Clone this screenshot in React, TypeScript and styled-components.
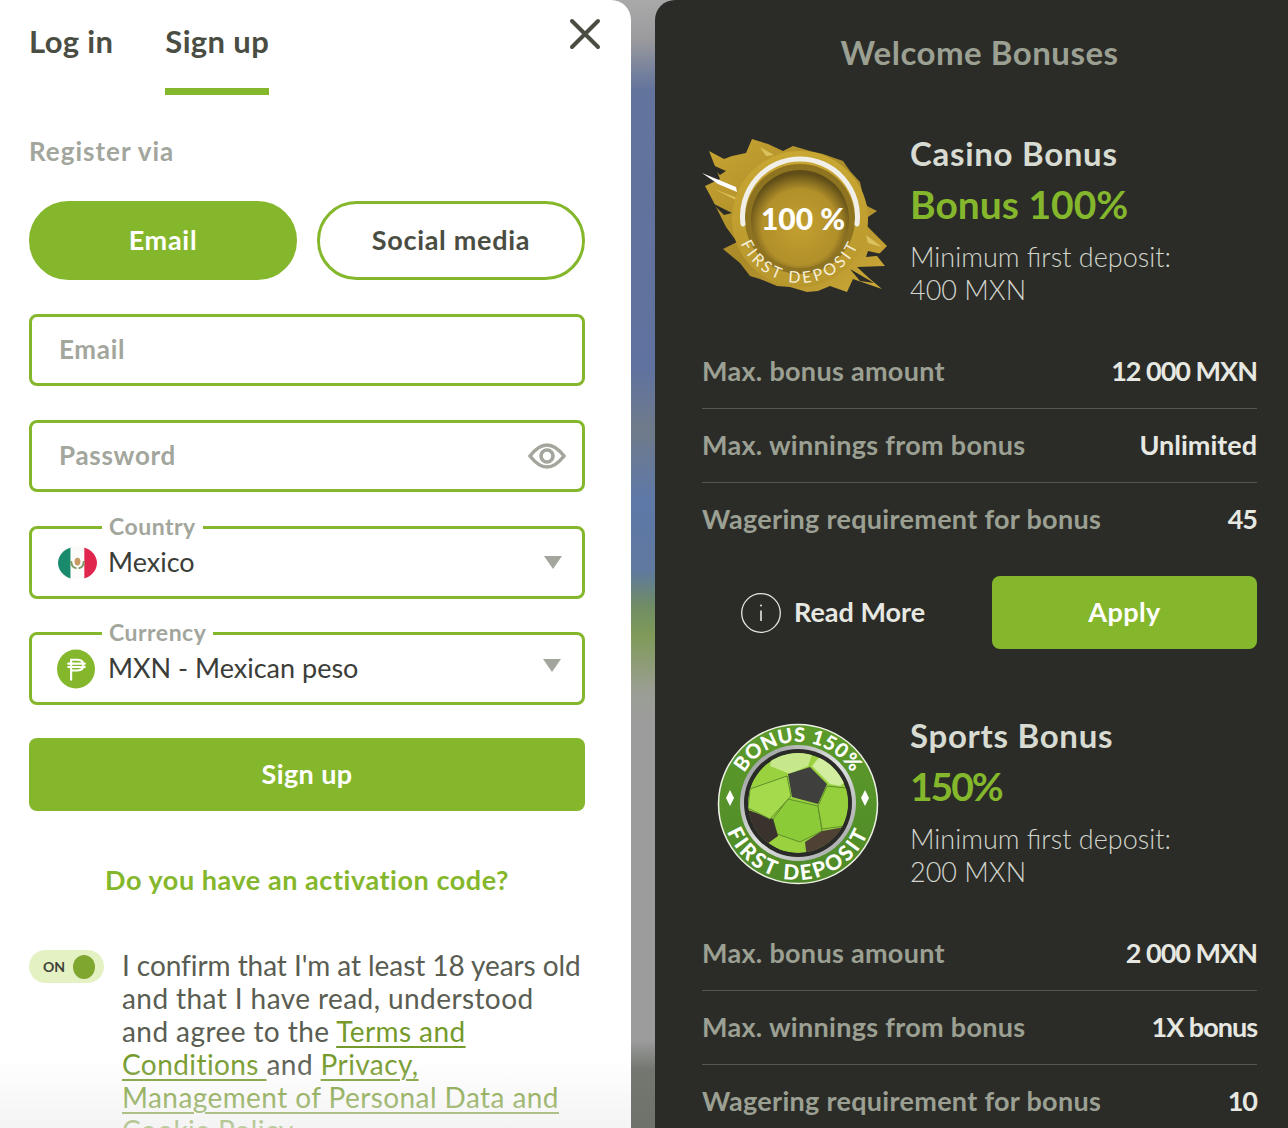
import React from "react";
import styled, { createGlobalStyle } from "styled-components";

const FONT = `"Lato", "Noto Sans", sans-serif`;
const GREEN = "#85b72c";

const Global = createGlobalStyle`
  html, body { margin: 0; padding: 0; overflow: hidden; }
  body { font-family: ${FONT}; }
  * { box-sizing: border-box; }
`;

const Page = styled.div`
  width: 1288px;
  height: 1128px;
  display: flex;
  gap: 24px;
  overflow: hidden;
  background: linear-gradient(180deg, #a9a9a9 0, #9a9a9d 40px, #62739c 90px, #60729f 370px, #6f7b8a 430px, #5e78a8 500px, #5f79a0 570px, #6f8c66 605px, #7f9a58 635px, #9a9e92 690px, #9c9c9c 720px, #9c9c9c 1040px, #737770 1070px, #6e726a 1128px);
`;

const AuthPanel = styled.section`
  position: relative;
  width: 631px;
  height: 1128px;
  flex: none;
  overflow: hidden;
  background: #fff;
  border-top-right-radius: 20px;
  padding: 0 46px 0 29px;
  &::after {
    content: "";
    position: absolute;
    left: 0;
    right: 0;
    bottom: 0;
    height: 70px;
    background: linear-gradient(180deg, rgba(240,240,240,0), rgba(236,236,236,.6));
    pointer-events: none;
  }
`;

const TabBar = styled.div`
  display: flex;
  gap: 52px;
  height: 95px;
  align-items: stretch;
  position: relative;
`;

const Tab = styled.div<{ $active?: boolean }>`
  font-size: 31px;
  letter-spacing: 0.35px;
  font-weight: 700;
  color: #4a4d42;
  padding-top: 22px;
  border-bottom: 7px solid ${(p) => (p.$active ? GREEN : "transparent")};
`;

const CloseButton = styled.svg`
  position: absolute;
  right: -16px;
  top: 18px;
`;

const SectionLabel = styled.div`
  margin-top: 39px;
  font-size: 26px;
  letter-spacing: 1px;
  line-height: 34px;
  font-weight: 700;
  color: #a2a69c;
`;

const MethodRow = styled.div`
  display: grid;
  grid-template-columns: 1fr 1fr;
  gap: 20px;
  margin-top: 33px;
`;

const MethodButton = styled.div<{ $active?: boolean }>`
  height: 79px;
  border-radius: 40px;
  border: 3px solid ${GREEN};
  background: ${(p) => (p.$active ? GREEN : "#fff")};
  color: ${(p) => (p.$active ? "#fff" : "#4a4d42")};
  font-size: 27px;
  letter-spacing: 0.7px;
  font-weight: 700;
  display: flex;
  align-items: center;
  justify-content: center;
  padding-bottom: 3px;
`;

const Form = styled.div`
  display: flex;
  flex-direction: column;
  margin-top: 34px;
`;

const Field = styled.div<{ $mt?: number; $h?: number }>`
  position: relative;
  height: ${(p) => p.$h ?? 72}px;
  margin-top: ${(p) => p.$mt ?? 0}px;
  border: 3px solid ${GREEN};
  border-radius: 8px;
  display: flex;
  align-items: center;
  padding: 0 27px 0 26px;
  background: #fff;
`;

const Placeholder = styled.span`
  margin-left: 1px;
  padding-bottom: 2px;
  font-size: 26px;
  letter-spacing: 0.7px;
  font-weight: 700;
  color: #a2a69c;
  flex: 1;
`;

const EyeSlot = styled.svg`
  margin-right: -11px;
`;

const FloatingLabel = styled.span`
  position: absolute;
  left: 70px;
  top: -16px;
  padding: 0 7px;
  background: #fff;
  font-size: 23px;
  letter-spacing: 0.5px;
  line-height: 26px;
  font-weight: 700;
  color: #a2a69c;
`;

const SelectValue = styled.span<{ $gap: number }>`
  margin-left: ${(p) => p.$gap}px;
  padding-bottom: 2px;
  font-size: 27px;
  color: #3b3d38;
  flex: 1;
`;

const Caret = styled.span<{ $lift?: number; $right: number }>`
  width: 0;
  height: 0;
  border-left: 9px solid transparent;
  border-right: 9px solid transparent;
  border-top: 13px solid #a2a69c;
  margin-right: ${(p) => p.$right}px;
  margin-bottom: ${(p) => p.$lift ?? 0}px;
`;

const SolidButton = styled.div<{ $w?: number; $mt?: number }>`
  height: 73px;
  width: ${(p) => (p.$w ? `${p.$w}px` : "100%")};
  margin-top: ${(p) => p.$mt ?? 0}px;
  background: ${GREEN};
  color: #fff;
  border-radius: 8px;
  font-size: 27px;
  letter-spacing: 0.4px;
  font-weight: 700;
  display: flex;
  align-items: center;
  justify-content: center;
  padding-bottom: 3px;
  flex: none;
`;

const ActivationLink = styled.div`
  margin-top: 52px;
  text-align: center;
  font-size: 27px;
  letter-spacing: 0.55px;
  line-height: 34px;
  font-weight: 700;
  color: ${GREEN};
`;

const ConsentRow = styled.div`
  display: flex;
  gap: 18px;
  margin-top: 52px;
`;

const Toggle = styled.div`
  width: 75px;
  height: 33px;
  margin-top: 1px;
  flex: none;
  border-radius: 17px;
  background: #e4f2c3;
  display: flex;
  align-items: center;
  justify-content: space-between;
  padding: 0 9px 0 14px;
  font-size: 14px;
  font-weight: 700;
  color: #3f4238;
  &::after {
    content: "";
    width: 22px;
    height: 24px;
    border-radius: 50%;
    background: #7fa62e;
  }
`;

const ConsentText = styled.div`
  font-size: 28px;
  letter-spacing: 0.42px;
  line-height: 33px;
  font-weight: 400;
  color: #5a5d52;
  flex: none;
  a {
    color: #759a2c;
    text-decoration: underline;
    text-decoration-thickness: 1.5px;
    text-underline-offset: 4px;
  }
`;

const ConsentLead = styled.span`
  letter-spacing: -0.07px;
`;

const BonusPanel = styled.section`
  flex: 1;
  height: 1128px;
  overflow: hidden;
  background: #2b2c28;
  border-top-left-radius: 20px;
  padding: 0 31px 0 47px;
`;

const PanelTitle = styled.h2`
  margin: 0;
  padding-top: 31px;
  text-align: center;
  font-size: 33px;
  letter-spacing: 0.5px;
  line-height: 42px;
  font-weight: 700;
  color: #9ba093;
`;

const BonusCard = styled.article<{ $mt: number }>`
  margin-top: ${(p) => p.$mt}px;
`;

const BonusHead = styled.div`
  display: grid;
  grid-template-columns: 208px 1fr;
  height: 174px;
`;

const BadgeSlot = styled.div`
  margin: 0 0 0 -12px;
  height: 174px;
`;

const BonusName = styled.div`
  font-size: 33px;
  letter-spacing: 0.7px;
  line-height: 42px;
  font-weight: 700;
  color: #d8dbd2;
`;

const BonusValue = styled.div<{ $spacing: number }>`
  margin-top: 5px;
  font-size: 39px;
  letter-spacing: ${(p) => p.$spacing}px;
  line-height: 50px;
  font-weight: 700;
  color: ${GREEN};
`;

const BonusMeta = styled.div`
  margin-top: 11px;
  font-size: 27px;
  line-height: 33px;
  font-weight: 300;
  color: #d2d5cc;
`;

const Stats = styled.div`
  margin-top: 28px;
`;

const StatRow = styled.div`
  height: 74px;
  display: flex;
  align-items: center;
  justify-content: space-between;
  border-top: 1px solid #54564f;
  padding-bottom: 2px;
  font-size: 27px;
  font-weight: 700;
  &:first-child {
    border-top: none;
  }
`;

const StatLabel = styled.span`
  color: #9ba093;
  letter-spacing: 0.3px;
`;

const StatValue = styled.span<{ $digits: boolean }>`
  color: #e6e8e1;
  letter-spacing: ${(p) => (p.$digits ? -1 : 0)}px;
`;

const Actions = styled.div`
  margin-top: 20px;
  display: flex;
  align-items: center;
  justify-content: space-between;
`;

const ReadMore = styled.div`
  margin-left: 39px;
  display: flex;
  align-items: center;
  gap: 13px;
  font-size: 27px;
  font-weight: 700;
  color: #e6e8e1;
`;

const ReadMoreLabel = styled.span`
  padding-bottom: 2px;
`;

const PesoSvg = styled.svg`
  margin-left: -1px;
`;

const CloseIcon = () => (
  <CloseButton width="32" height="32" viewBox="0 0 32 32" fill="none" stroke="#4a4d42" strokeWidth="4" strokeLinecap="round">
    <path d="M3 3 L29 29 M29 3 L3 29" />
  </CloseButton>
);

const EyeIcon = () => (
  <EyeSlot width="38" height="26" viewBox="0 0 38 26" fill="none" stroke="#a2a69c" strokeWidth="3.6">
    <path d="M2 13 C9 4 14 2 19 2 C24 2 29 4 36 13 C29 22 24 24 19 24 C14 24 9 22 2 13 Z" />
    <circle cx="19" cy="13" r="6" />
  </EyeSlot>
);

const MexicoFlag = () => (
  <svg width="39" height="34" viewBox="0 0 40 34">
    <defs>
      <clipPath id="flagClip"><ellipse cx="20" cy="17" rx="20" ry="17" /></clipPath>
    </defs>
    <g clipPath="url(#flagClip)">
      <rect width="13" height="34" fill="#1a8a6d" />
      <rect x="13" width="14" height="34" fill="#fbfbf9" />
      <rect x="27" width="13" height="34" fill="#e0264c" />
    </g>
    <ellipse cx="20" cy="15.5" rx="3" ry="4" fill="#c79a63" />
    <path d="M13.5 15 C13.5 20 16 22 19 22.5 M26.5 15 C26.5 20 24 22 21 22.5" fill="none" stroke="#7f9a63" strokeWidth="2" />
  </svg>
);

const PesoIcon = () => (
  <PesoSvg width="38" height="40" viewBox="0 0 39 40">
    <ellipse cx="19.5" cy="20" rx="19.5" ry="20" fill={GREEN} />
    <g fill="none" stroke="#fff" strokeWidth="2.2" strokeLinecap="round">
      <path d="M14.5 31 V10.5 H21 C25 10.5 27 13 27 16 C27 19 25 21.5 21 21.5 H14.5" />
      <path d="M11.5 14.5 H28.5 M11.5 18 H28.5" />
    </g>
  </PesoSvg>
);

const InfoIcon = () => (
  <svg width="40" height="40" viewBox="0 0 40 40" fill="none" stroke="#e6e8e1">
    <circle cx="20" cy="20" r="19.3" strokeWidth="1.3" />
    <path d="M20 17.5 V28" strokeWidth="1.6" />
    <circle cx="20" cy="12.5" r="1" fill="#e6e8e1" stroke="none" />
  </svg>
);

const CasinoBadge = () => (
  <svg width="210" height="180" viewBox="0 3 210 180">
    <defs>
      <linearGradient id="goldBrush" x1="0" y1="0" x2="1" y2="1">
        <stop offset="0" stopColor="#c9a532" />
        <stop offset=".5" stopColor="#a98a28" />
        <stop offset="1" stopColor="#cfaa38" />
      </linearGradient>
      <linearGradient id="goldRing" x1="0" y1="0" x2="0" y2="1">
        <stop offset="0" stopColor="#c9a733" />
        <stop offset="1" stopColor="#b8972d" />
      </linearGradient>
      <radialGradient id="goldDisc" cx=".5" cy=".58" r=".55">
        <stop offset="0" stopColor="#c2a02f" />
        <stop offset=".7" stopColor="#b2902a" />
        <stop offset="1" stopColor="#5f4d17" />
      </radialGradient>
      <path id="casinoArc" d="M 46 90 A 64 64 0 0 0 174 90" />
    </defs>
    <path
      fill="url(#goldBrush)"
      d="M19 22 L34 30 L42 27 L56 24 L62 10 L78 15 L93 22 L103 17 L120 22 L133 25 L153 32 L160 42 L170 53 L172 62 L177 77 L187 82 L178 88 L177 97 L186 106 L197 117 L187 127 L195 137 L167 138 L180 150 L192 160 L163 150 L157 163 L140 157 L128 162 L117 163 L100 158 L87 157 L70 150 L60 147 L50 134 L33 120 L47 113 L36 98 L27 80 L22 70 L15 57 L30 50 Z"
    />
    <g fill="#2b2c28">
      <path d="M18 34 L36 42 L30 46 Z" />
      <path d="M22 74 L42 84 L34 86 Z" />
      <path d="M178 122 L196 126 L176 128 Z" />
      <path d="M160 140 L184 154 L170 152 Z" />
    </g>
    <g fill="#dcc25c">
      <path d="M24 60 L50 70 L50 73 Z" />
      <path d="M70 18 L84 26 L76 27 Z" />
      <path d="M176 106 L192 118 L178 114 Z" />
    </g>
    <path fill="#fff" d="M12 44 L46 58 L47 63 L28 55 Z" />
    <circle cx="110" cy="90" r="68" fill="url(#goldRing)" />
    <circle cx="110" cy="90" r="55" fill="#8e7320" />
    <circle cx="110" cy="90" r="49" fill="url(#goldDisc)" />
    <path d="M53 95 A 57.5 57.5 0 1 1 167 95" fill="none" stroke="#f0efe9" strokeWidth="5" strokeLinecap="round" />
    <text x="113" y="101" textAnchor="middle" fill="#fff" fontFamily="Lato, sans-serif" fontWeight="900" fontSize="30">100 %</text>
    <text fill="#f5efd9" fontFamily="Lato, sans-serif" fontSize="16" letterSpacing="3">
      <textPath href="#casinoArc" startOffset="50%" textAnchor="middle">FIRST DEPOSIT</textPath>
    </text>
  </svg>
);

const SportsBadge = () => (
  <svg width="210" height="180" viewBox="0 0 210 180">
    <defs>
      <clipPath id="ballClip"><circle cx="108" cy="89" r="50" /></clipPath>
      <linearGradient id="ringGreen" x1="0" y1="0" x2="0" y2="1">
        <stop offset="0" stopColor="#5c9a2a" />
        <stop offset="1" stopColor="#4e8a28" />
      </linearGradient>
      <linearGradient id="ringSilver" x1="0" y1="0" x2="1" y2="1">
        <stop offset="0" stopColor="#8b8e8e" />
        <stop offset=".5" stopColor="#e0e2e2" />
        <stop offset="1" stopColor="#9b9e9e" />
      </linearGradient>
      <path id="sportsTop" d="M 46 90 A 62 62 0 0 1 170 90" />
      <path id="sportsBottom" d="M 32 90 A 76 76 0 0 0 184 90" />
    </defs>
    <circle cx="108" cy="90" r="79.5" fill="url(#ringGreen)" stroke="#eef2e6" strokeWidth="1.5" />
    <circle cx="108" cy="89" r="58" fill="url(#ringSilver)" />
    <circle cx="108" cy="89" r="54" fill="#2a2a28" />
    <g clipPath="url(#ballClip)">
      <circle cx="108" cy="89" r="50" fill="#9ad23f" />
      <polygon points="80,52 100,60 118,52 126,30 84,30" fill="#c6e88a" />
      <polygon points="122,52 140,70 150,72 165,60 140,30" fill="#d2eda0" />
      <polygon points="98,60 120,53 137,70 128,90 102,83" fill="#3f403e" />
      <polygon points="83,105 98,85 128,92 132,117 110,128 87,120" fill="#8ccb38" stroke="#5f8f2c" />
      <polygon points="55,95 83,105 88,122 77,130 55,125" fill="#3a322c" />
      <polygon points="115,128 132,117 155,113 142,137 117,145" fill="#4f4234" />
      <polygon points="60,75 97,62 101,82 80,105 58,94" fill="#a4da4b" stroke="#5f8f2c" />
      <polygon points="137,72 128,92 132,115 155,112 165,75" fill="#95cf3c" stroke="#5f8f2c" />
    </g>
    <text fill="#fff" fontFamily="Lato, sans-serif" fontWeight="900" fontSize="20" letterSpacing="0.3">
      <textPath href="#sportsTop" startOffset="50%" textAnchor="middle">BONUS 150%</textPath>
    </text>
    <text fill="#fff" fontFamily="Lato, sans-serif" fontWeight="900" fontSize="21" letterSpacing="2.5">
      <textPath href="#sportsBottom" startOffset="50%" textAnchor="middle">FIRST DEPOSIT</textPath>
    </text>
    <path d="M40 76 L44 84 L40 92 L36 84 Z M175 76 L179 84 L175 92 L171 84 Z" fill="#fff" />
  </svg>
);

type Bonus = {
  name: string;
  value: string;
  valueSpacing: number;
  minimum: string;
  stats: [string, string][];
  badge: React.ReactNode;
  top: number;
};

const bonuses: Bonus[] = [
  {
    name: "Casino Bonus",
    value: "Bonus 100%",
    valueSpacing: 0,
    minimum: "400 MXN",
    stats: [
      ["Max. bonus amount", "12 000 MXN"],
      ["Max. winnings from bonus", "Unlimited"],
      ["Wagering requirement for bonus", "45"],
    ],
    badge: <CasinoBadge />,
    top: 59,
  },
  {
    name: "Sports Bonus",
    value: "150%",
    valueSpacing: -2,
    minimum: "200 MXN",
    stats: [
      ["Max. bonus amount", "2 000 MXN"],
      ["Max. winnings from bonus", "1X bonus"],
      ["Wagering requirement for bonus", "10"],
    ],
    badge: <SportsBadge />,
    top: 65,
  },
];

export default function App() {
  return (
    <Page>
      <Global />
      <AuthPanel>
        <TabBar>
          <Tab>Log in</Tab>
          <Tab $active>Sign up</Tab>
          <CloseIcon />
        </TabBar>
        <SectionLabel>Register via</SectionLabel>
        <MethodRow>
          <MethodButton $active>Email</MethodButton>
          <MethodButton>Social media</MethodButton>
        </MethodRow>
        <Form>
          <Field>
            <Placeholder>Email</Placeholder>
          </Field>
          <Field $mt={34}>
            <Placeholder>Password</Placeholder>
            <EyeIcon />
          </Field>
          <Field $mt={34} $h={73}>
            <FloatingLabel>Country</FloatingLabel>
            <MexicoFlag />
            <SelectValue $gap={11}>Mexico</SelectValue>
            <Caret $right={-7} />
          </Field>
          <Field $mt={33} $h={73}>
            <FloatingLabel>Currency</FloatingLabel>
            <PesoIcon />
            <SelectValue $gap={13}>MXN - Mexican peso</SelectValue>
            <Caret $right={-6} $lift={6} />
          </Field>
          <SolidButton $mt={33}>Sign up</SolidButton>
        </Form>
        <ActivationLink>Do you have an activation code?</ActivationLink>
        <ConsentRow>
          <Toggle>ON</Toggle>
          <ConsentText>
            <ConsentLead>I confirm that I'm at least 18 years old</ConsentLead>
            <br />
            and that I have read, understood
            <br />
            and agree to the <a href="#terms">Terms and</a>
            <br />
            <a href="#terms">Conditions </a>and <a href="#privacy">Privacy,</a>
            <br />
            <a href="#privacy">Management of Personal Data and</a>
            <br />
            <a href="#privacy">Cookie Policy</a>
          </ConsentText>
        </ConsentRow>
      </AuthPanel>
      <BonusPanel>
        <PanelTitle>Welcome Bonuses</PanelTitle>
        {bonuses.map((b) => (
          <BonusCard key={b.name} $mt={b.top}>
            <BonusHead>
              <BadgeSlot>{b.badge}</BadgeSlot>
              <div>
                <BonusName>{b.name}</BonusName>
                <BonusValue $spacing={b.valueSpacing}>{b.value}</BonusValue>
                <BonusMeta>
                  Minimum first deposit:
                  <br />
                  {b.minimum}
                </BonusMeta>
              </div>
            </BonusHead>
            <Stats>
              {b.stats.map(([label, value]) => (
                <StatRow key={label}>
                  <StatLabel>{label}</StatLabel>
                  <StatValue $digits={/\d/.test(value)}>{value}</StatValue>
                </StatRow>
              ))}
            </Stats>
            <Actions>
              <ReadMore>
                <InfoIcon />
                <ReadMoreLabel>Read More</ReadMoreLabel>
              </ReadMore>
              <SolidButton $w={265}>Apply</SolidButton>
            </Actions>
          </BonusCard>
        ))}
      </BonusPanel>
    </Page>
  );
}
